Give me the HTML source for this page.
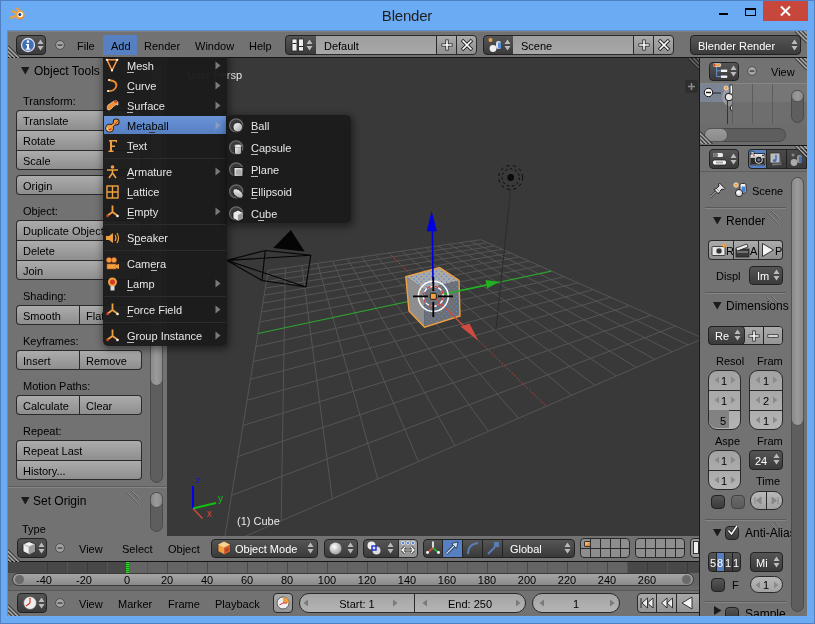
<!DOCTYPE html><html><head><meta charset="utf-8"><style>
*{margin:0;padding:0;box-sizing:border-box}
html,body{width:815px;height:624px;overflow:hidden}
body{position:relative;background:#6AABF4;font-family:"Liberation Sans",sans-serif;font-size:11px}
div{position:absolute}
.t{white-space:nowrap;line-height:1;will-change:transform}
.tc{white-space:nowrap;line-height:1;text-align:center;will-change:transform}
.tool{background:linear-gradient(#ABABAB,#8F8F8F);border:1px solid #2A2A2A}
.dk{background:linear-gradient(#555,#3A3A3A);border:1px solid #222;border-radius:4px}
.num{background:linear-gradient(#A4A4A4,#B6B6B6);border:1px solid #2A2A2A}
.scr{background:#5E5E5E;border:1px solid #4A4A4A;border-radius:7px}
.hdl{background:linear-gradient(90deg,#8A8A8A,#9A9A9A,#8A8A8A);border-radius:7px;border:1px solid #555}
</style></head><body><div style="left:0;top:0;width:815px;height:1px;background:#4F80C4"></div>
<div class="tc" style="left:307px;top:7px;width:200px;font-size:15px;line-height:18px;color:#1E1E1E;letter-spacing:-0.2px">Blender</div>
<div style="left:763px;top:1px;width:45px;height:20px;background:#C7473C"></div>
<svg style="position:absolute;left:779px;top:5px" width="13" height="12"><path d="M2 1.5L11 10.5M11 1.5L2 10.5" stroke="#fff" stroke-width="2"/></svg>
<div style="left:745px;top:8px;width:11px;height:8px;border:1px solid #000;border-top-width:2px"></div>
<div style="left:719px;top:13px;width:9px;height:2px;background:#000"></div>
<svg style="position:absolute;left:9px;top:7px" width="16" height="16"><path d="M11 7.7L3.6 4.2M11 7.7L2 10.6M11 5L8.2 1.6" stroke="#F0A040" stroke-width="2.4" stroke-linecap="round"/><circle cx="11" cy="7.9" r="4.6" fill="#F0A040"/><circle cx="11.2" cy="7.6" r="2.7" fill="#FFF"/><circle cx="10.8" cy="7.6" r="1.5" fill="#1A3A70"/><path d="M14.5 10A4.6 4.6 0 0 1 9.5 12.3" stroke="#D04030" stroke-width="0.8" fill="none" stroke-dasharray="1 1"/></svg>
<div style="left:0;top:0;width:1px;height:624px;background:#4F80C4"></div>
<div style="left:8px;top:31px;width:799px;height:585px;background:#262626"></div>
<div style="left:8px;top:31px;width:799px;height:26px;background:#727272"></div>
<div style="left:8px;top:57px;width:799px;height:1px;background:#151515"></div>
<div style="left:8px;top:30px;width:799px;height:1px;background:#5A8ED6"></div>
<div style="left:8px;top:31px;width:799px;height:1px;background:#7E7E7E"></div>
<svg style="position:absolute;left:8px;top:45px" width="13" height="13"><path d="M0 2L11 13M0 6L7 13M0 10L3 13" stroke="#A8A8A8" stroke-width="1.5"/><path d="M0 0.5L12.5 13M0 4.5L8.5 13M0 8.5L4.5 13" stroke="#1E1E1E" stroke-width="1"/></svg>
<div class="dk" style="left:16px;top:35px;width:30px;height:20px;"></div>
<svg style="position:absolute;left:20px;top:37px" width="16" height="16"><circle cx="8" cy="8" r="6.5" fill="#3E6FB8" stroke="#DDE" stroke-width="1.3"/><circle cx="8" cy="4.6" r="1.3" fill="#fff"/><path d="M6 7H9V11.5H10.3V12.8H5.8V11.5H7V8.3H6Z" fill="#fff"/></svg>
<svg style="position:absolute;left:37px;top:39px" width="7" height="12"><path d="M0.5 5L3.5 0.5L6.5 5Z M0.5 7L3.5 11.5L6.5 7Z" fill="#BBB"/></svg>
<svg style="position:absolute;left:54px;top:39px" width="12" height="12"><circle cx="6" cy="6" r="4.4" fill="#A4A4A4" stroke="#505050" stroke-width="1"/><rect x="3.6" y="5.4" width="4.8" height="1.3" fill="#3A3A3A"/></svg>
<div class="t" style="left:77px;top:41px;font-size:11px;color:#000;">File</div>
<div style="left:103px;top:35px;width:34px;height:20px;background:#5680C2"></div>
<div class="t" style="left:111px;top:41px;font-size:11px;color:#000;">Add</div>
<div class="t" style="left:144px;top:41px;font-size:11px;color:#000;">Render</div>
<div class="t" style="left:195px;top:41px;font-size:11px;color:#000;">Window</div>
<div class="t" style="left:249px;top:41px;font-size:11px;color:#000;">Help</div>
<div class="dk" style="left:285px;top:35px;width:32px;height:20px;border-radius:4px 0 0 4px"></div>
<svg style="position:absolute;left:291px;top:38px" width="14" height="14"><rect x="1" y="1" width="5" height="12" fill="#EEE" stroke="#222" stroke-width="0.8"/><rect x="7.5" y="1" width="5" height="12" fill="#EEE" stroke="#222" stroke-width="0.8"/><rect x="1.5" y="5" width="4" height="1" fill="#222"/><rect x="8" y="8" width="4" height="1" fill="#222"/></svg>
<svg style="position:absolute;left:306px;top:39px" width="7" height="12"><path d="M0.5 5L3.5 0.5L6.5 5Z M0.5 7L3.5 11.5L6.5 7Z" fill="#BBB"/></svg>
<div style="left:316px;top:35px;width:121px;height:20px;background:linear-gradient(#9E9E9E,#A8A8A8);border:1px solid #2A2A2A;border-left:none"></div>
<div class="t" style="left:324px;top:41px;font-size:11px;color:#000;">Default</div>
<div class="tool" style="left:436px;top:35px;width:21px;height:20px;border-left:1px solid #2A2A2A"></div>
<svg style="position:absolute;left:440px;top:38px" width="14" height="14"><path d="M7 1.5V12.5M1.5 7H12.5" stroke="#222" stroke-width="3.2"/><path d="M7 2.2V11.8M2.2 7H11.8" stroke="#fff" stroke-width="1.6"/></svg>
<div class="tool" style="left:456px;top:35px;width:21px;height:20px;border-radius:0 4px 4px 0"></div>
<svg style="position:absolute;left:460px;top:38px" width="14" height="14"><path d="M2 2L12 12M12 2L2 12" stroke="#222" stroke-width="3.4"/><path d="M2.5 2.5L11.5 11.5M11.5 2.5L2.5 11.5" stroke="#fff" stroke-width="1.7"/></svg>
<div class="dk" style="left:483px;top:35px;width:31px;height:20px;border-radius:4px 0 0 4px"></div>
<svg style="position:absolute;left:487px;top:37px" width="16" height="16"><circle cx="3.5" cy="3" r="2" fill="#F0A040"/><rect x="9" y="4" width="5" height="8" rx="2.3" fill="#DDD"/><rect x="11" y="5.5" width="3" height="6" fill="#5A8FD8"/><circle cx="6" cy="11.5" r="3.4" fill="#EEE"/></svg>
<svg style="position:absolute;left:504px;top:39px" width="7" height="12"><path d="M0.5 5L3.5 0.5L6.5 5Z M0.5 7L3.5 11.5L6.5 7Z" fill="#BBB"/></svg>
<div style="left:513px;top:35px;width:121px;height:20px;background:linear-gradient(#9E9E9E,#A8A8A8);border:1px solid #2A2A2A;border-left:none"></div>
<div class="t" style="left:521px;top:41px;font-size:11px;color:#000;">Scene</div>
<div class="tool" style="left:633px;top:35px;width:21px;height:20px;border-left:1px solid #2A2A2A"></div>
<svg style="position:absolute;left:637px;top:38px" width="14" height="14"><path d="M7 1.5V12.5M1.5 7H12.5" stroke="#222" stroke-width="3.2"/><path d="M7 2.2V11.8M2.2 7H11.8" stroke="#fff" stroke-width="1.6"/></svg>
<div class="tool" style="left:653px;top:35px;width:21px;height:20px;border-radius:0 4px 4px 0"></div>
<svg style="position:absolute;left:657px;top:38px" width="14" height="14"><path d="M2 2L12 12M12 2L2 12" stroke="#222" stroke-width="3.4"/><path d="M2.5 2.5L11.5 11.5M11.5 2.5L2.5 11.5" stroke="#fff" stroke-width="1.7"/></svg>
<div class="dk" style="left:690px;top:35px;width:111px;height:20px;"></div>
<div class="t" style="left:698px;top:41px;font-size:11px;color:#FFF;">Blender Render</div>
<svg style="position:absolute;left:791px;top:39px" width="7" height="12"><path d="M0.5 5L3.5 0.5L6.5 5Z M0.5 7L3.5 11.5L6.5 7Z" fill="#BBB"/></svg>
<svg style="position:absolute;left:795px;top:31px" width="12" height="12"><path d="M1 0L12 11M5 0L12 7M9 0L12 3" stroke="#A8A8A8" stroke-width="1.5"/><path d="M-0.5 0L12 12.5M3.5 0L12 8.5M7.5 0L12 4.5" stroke="#1E1E1E" stroke-width="1"/></svg>
<div style="left:8px;top:58px;width:159px;height:478px;background:#727272"></div>
<div class="scr" style="left:150px;top:64px;width:13px;height:419px;"></div>
<div class="hdl" style="left:150px;top:64px;width:13px;height:322px;"></div>
<div class="scr" style="left:150px;top:492px;width:13px;height:40px;"></div>
<div class="hdl" style="left:150px;top:492px;width:13px;height:16px;"></div>
<svg style="position:absolute;left:21px;top:67px" width="9" height="8"><path d="M0 0H8.5L4.25 7.5Z" fill="#1A1A1A"/></svg>
<div class="t" style="left:34px;top:65px;font-size:12px;color:#000;">Object Tools</div>
<div class="t" style="left:23px;top:96px;font-size:11px;color:#000;">Transform:</div>
<div style="left:16px;top:110px;width:126px;height:60px;border-radius:4px;background:#2A2A2A;overflow:hidden"></div>
<div style="left:17px;top:111px;width:124px;height:19px;background:linear-gradient(#ACACAC,#8E8E8E);border-radius:3px 3px 0 0"></div>
<div class="t" style="left:23px;top:116px;font-size:11px;color:#000;">Translate</div>
<div style="left:17px;top:131px;width:124px;height:19px;background:linear-gradient(#ACACAC,#8E8E8E)"></div>
<div class="t" style="left:23px;top:136px;font-size:11px;color:#000;">Rotate</div>
<div style="left:17px;top:151px;width:124px;height:18px;background:linear-gradient(#ACACAC,#8E8E8E);border-radius:0 0 3px 3px"></div>
<div class="t" style="left:23px;top:156px;font-size:11px;color:#000;">Scale</div>
<div style="left:16px;top:175px;width:126px;height:20px;border-radius:4px;background:#2A2A2A;overflow:hidden"></div>
<div style="left:17px;top:176px;width:124px;height:18px;background:linear-gradient(#ACACAC,#8E8E8E);border-radius:3px"></div>
<div class="t" style="left:23px;top:181px;font-size:11px;color:#000;">Origin</div>
<div class="t" style="left:23px;top:206px;font-size:11px;color:#000;">Object:</div>
<div style="left:16px;top:220px;width:126px;height:60px;border-radius:4px;background:#2A2A2A;overflow:hidden"></div>
<div style="left:17px;top:221px;width:124px;height:19px;background:linear-gradient(#ACACAC,#8E8E8E);border-radius:3px 3px 0 0"></div>
<div class="t" style="left:23px;top:226px;font-size:11px;color:#000;">Duplicate Objects</div>
<div style="left:17px;top:241px;width:124px;height:19px;background:linear-gradient(#ACACAC,#8E8E8E)"></div>
<div class="t" style="left:23px;top:246px;font-size:11px;color:#000;">Delete</div>
<div style="left:17px;top:261px;width:124px;height:18px;background:linear-gradient(#ACACAC,#8E8E8E);border-radius:0 0 3px 3px"></div>
<div class="t" style="left:23px;top:266px;font-size:11px;color:#000;">Join</div>
<div class="t" style="left:23px;top:291px;font-size:11px;color:#000;">Shading:</div>
<div style="left:16px;top:305px;width:126px;height:20px;border-radius:4px;background:#2A2A2A"></div>
<div style="left:17px;top:306px;width:62px;height:18px;background:linear-gradient(#ACACAC,#8E8E8E);border-radius:3px 0 0 3px"></div>
<div class="t" style="left:23px;top:311px;font-size:11px;color:#000;">Smooth</div>
<div style="left:80px;top:306px;width:61px;height:18px;background:linear-gradient(#ACACAC,#8E8E8E);border-radius:0 3px 3px 0"></div>
<div class="t" style="left:86px;top:311px;font-size:11px;color:#000;">Flat</div>
<div class="t" style="left:23px;top:336px;font-size:11px;color:#000;">Keyframes:</div>
<div style="left:16px;top:350px;width:126px;height:20px;border-radius:4px;background:#2A2A2A"></div>
<div style="left:17px;top:351px;width:62px;height:18px;background:linear-gradient(#ACACAC,#8E8E8E);border-radius:3px 0 0 3px"></div>
<div class="t" style="left:23px;top:356px;font-size:11px;color:#000;">Insert</div>
<div style="left:80px;top:351px;width:61px;height:18px;background:linear-gradient(#ACACAC,#8E8E8E);border-radius:0 3px 3px 0"></div>
<div class="t" style="left:86px;top:356px;font-size:11px;color:#000;">Remove</div>
<div class="t" style="left:23px;top:381px;font-size:11px;color:#000;">Motion Paths:</div>
<div style="left:16px;top:395px;width:126px;height:20px;border-radius:4px;background:#2A2A2A"></div>
<div style="left:17px;top:396px;width:62px;height:18px;background:linear-gradient(#ACACAC,#8E8E8E);border-radius:3px 0 0 3px"></div>
<div class="t" style="left:23px;top:401px;font-size:11px;color:#000;">Calculate</div>
<div style="left:80px;top:396px;width:61px;height:18px;background:linear-gradient(#ACACAC,#8E8E8E);border-radius:0 3px 3px 0"></div>
<div class="t" style="left:86px;top:401px;font-size:11px;color:#000;">Clear</div>
<div class="t" style="left:23px;top:426px;font-size:11px;color:#000;">Repeat:</div>
<div style="left:16px;top:440px;width:126px;height:40px;border-radius:4px;background:#2A2A2A;overflow:hidden"></div>
<div style="left:17px;top:441px;width:124px;height:19px;background:linear-gradient(#ACACAC,#8E8E8E);border-radius:3px 3px 0 0"></div>
<div class="t" style="left:23px;top:446px;font-size:11px;color:#000;">Repeat Last</div>
<div style="left:17px;top:461px;width:124px;height:18px;background:linear-gradient(#ACACAC,#8E8E8E);border-radius:0 0 3px 3px"></div>
<div class="t" style="left:23px;top:466px;font-size:11px;color:#000;">History...</div>
<div style="left:8px;top:486px;width:159px;height:1px;background:#5E5E5E"></div>
<div style="left:8px;top:487px;width:159px;height:1px;background:#858585"></div>
<svg style="position:absolute;left:21px;top:497px" width="9" height="8"><path d="M0 0H8.5L4.25 7.5Z" fill="#1A1A1A"/></svg>
<div class="t" style="left:33px;top:495px;font-size:12px;color:#000;">Set Origin</div>
<svg style="position:absolute;left:124px;top:490px" width="17" height="17"><path d="M2 2L15 15M7 1L15 9" stroke="#5A5A5A" stroke-width="1"/><path d="M3 2L16 15M8 1L16 9" stroke="#8A8A8A" stroke-width="1"/></svg>
<div class="t" style="left:22px;top:524px;font-size:11px;color:#000;">Type</div>
<svg style="position:absolute;left:167px;top:58px" width="532" height="478" viewBox="167 58 532 478"><rect x="167" y="58" width="532" height="478" fill="#393939"/><path d="M268.2 270.4L480.7 239.7M268.2 270.4L223.4 545.8M267.3 275.7L487.4 242.7M285.3 267.9L281.2 520.8M266.3 281.6L494.6 245.9M301.8 265.5L332.3 498.8M265.3 288.1L502.3 249.3M317.6 263.2L377.8 479.1M264.1 295.2L510.6 253.0M332.9 261.0L418.5 461.5M262.8 303.2L519.6 256.9M347.7 258.9L455.2 445.7M261.4 312.1L529.3 261.2M361.9 256.9L488.4 431.3M259.7 322.1L539.9 265.9M375.6 254.9L518.6 418.3M255.8 346.6L564.0 276.7M401.7 251.1L571.5 395.4M253.3 361.7L577.9 282.8M414.1 249.3L594.8 385.3M250.4 379.3L593.3 289.6M426.1 247.6L616.4 376.0M247.0 400.3L610.4 297.2M437.7 245.9L636.3 367.4M242.9 425.5L629.5 305.7M449.0 244.3L654.8 359.4M237.9 456.5L651.0 315.3M459.9 242.7L672.1 351.9M231.6 495.4L675.4 326.1M470.5 241.2L688.2 345.0M223.4 545.8L703.3 338.4M480.7 239.7L703.3 338.4" stroke="#555555" stroke-width="1" fill="none"/><path d="M257.9 333.5L551.4 271.1" stroke="#2FA12F" stroke-width="1.2"/><path d="M388.9 253.0L546.2 406.3" stroke="#C8493F" stroke-width="1" stroke-dasharray="1.5 2"/><path d="M510.7 189.5L495.8 330.9" stroke="#2C2C2C" stroke-width="1"/><circle cx="510.7" cy="177.5" r="3.4" fill="#0A0A0A"/><circle cx="510.7" cy="177.5" r="8.7" fill="none" stroke="#0A0A0A" stroke-width="1" stroke-dasharray="2.5 2.5"/><circle cx="510.7" cy="177.5" r="12" fill="none" stroke="#0A0A0A" stroke-width="1" stroke-dasharray="3 3.5"/><path d="M227.1 260.4L265.2 250.5M227.1 260.4L310.8 255.3M227.1 260.4L305.9 287.0M227.1 260.4L262.0 280.6M265.2 250.5L310.8 255.3L305.9 287.0L262.0 280.6Z" stroke="#050505" stroke-width="1.1" fill="none"/><path d="M273.2 247.9L290.9 230L304.6 251.4Z" fill="#050505"/><path d="M405.8 276.6L439.6 267.6L459.0 280.4L424.0 289.5Z" fill="#A9A9A9"/><path d="M405.8 276.6L424.0 289.5L424.5 327.2L409.0 311.0Z" fill="#8E8E8E"/><path d="M424.0 289.5L459.0 280.4L460.0 316.0L424.5 327.2Z" fill="#6E6E6E"/><defs><pattern id="dots" width="5" height="5" patternUnits="userSpaceOnUse"><circle cx="1.5" cy="1.5" r="0.8" fill="#5B86CC"/><circle cx="4" cy="4" r="0.8" fill="#5B86CC"/></pattern></defs><path d="M405.8 276.6L439.6 267.6L459.0 280.4L424.0 289.5Z" fill="url(#dots)"/><path d="M424.0 289.5L459.0 280.4L460.0 316.0L424.5 327.2Z" fill="url(#dots)"/><path d="M405.8 276.6L439.6 267.6L459.0 280.4L460.0 316.0L424.5 327.2L409.0 311.0Z" fill="none" stroke="#F0A040" stroke-width="1.4"/><path d="M433 283L432.4 231" stroke="#0000E0" stroke-width="1.6"/><path d="M431.6 210.9L426.8 231.3L436.9 231.3Z" fill="#0000E0"/><path d="M499.7 281.7L485.5 280L487 288.5Z" fill="#22B022"/><path d="M433.2 296.2L470 332" stroke="#D04A3F" stroke-width="1.2"/><path d="M478.5 341L460.5 326.5L469.5 323.5Z" fill="#D04A3F"/><path d="M441.2 294.7L487 285" stroke="#22B022" stroke-width="1.4"/><circle cx="433.3" cy="296.3" r="15" fill="none" stroke="#FFF" stroke-width="1.5"/><circle cx="433.3" cy="296.3" r="10" fill="none" stroke="#FFF" stroke-width="1.3"/><circle cx="433.3" cy="296.3" r="10" fill="none" stroke="#D03030" stroke-width="1.3" stroke-dasharray="4 4"/><path d="M413 296.3H428M438 296.3H453M433.3 277V291M433.3 302V317" stroke="#000" stroke-width="1.8"/><rect x="430.3" y="293.3" width="6" height="6" rx="1" fill="#F0A040" stroke="#000" stroke-width="0.8"/><path d="M193 508.5V486" stroke="#0000F0" stroke-width="2"/><path d="M193 508.5L216 503" stroke="#10C010" stroke-width="1.8"/><path d="M193 508.5L202.5 518.5" stroke="#D04A3F" stroke-width="1.5"/></svg>
<div class="t" style="left:196px;top:476px;font-size:9px;color:#1010F0;">z</div>
<div class="t" style="left:218px;top:494px;font-size:10px;color:#10C010;">y</div>
<div class="t" style="left:207px;top:509px;font-size:10px;color:#D04A3F;">x</div>
<div class="t" style="left:187px;top:70px;font-size:11px;color:#E8E8E8;">User Persp</div>
<div class="t" style="left:237px;top:516px;font-size:11px;color:#E8E8E8;">(1) Cube</div>
<div style="left:685px;top:80px;width:13px;height:13px;background:rgba(40,40,40,0.6);border-radius:3px"></div>
<svg style="position:absolute;left:687px;top:82px" width="9" height="9"><path d="M4.5 1V8M1 4.5H8" stroke="#8A8A8A" stroke-width="1.6"/></svg>
<svg style="position:absolute;left:688px;top:58px" width="12" height="12"><path d="M1 0L12 11M5 0L12 7M9 0L12 3" stroke="#6A6A6A" stroke-width="1.5"/><path d="M-0.5 0L12 12.5M3.5 0L12 8.5M7.5 0L12 4.5" stroke="#1E1E1E" stroke-width="1"/></svg>
<div style="left:699px;top:58px;width:1px;height:478px;background:#1A1A1A"></div>
<div style="left:8px;top:536px;width:691px;height:25px;background:#727272"></div>
<div style="left:8px;top:561px;width:691px;height:1px;background:#151515"></div>
<svg style="position:absolute;left:8px;top:549px" width="13" height="13"><path d="M0 2L11 13M0 6L7 13M0 10L3 13" stroke="#A8A8A8" stroke-width="1.5"/><path d="M0 0.5L12.5 13M0 4.5L8.5 13M0 8.5L4.5 13" stroke="#1E1E1E" stroke-width="1"/></svg>
<div class="dk" style="left:17px;top:538px;width:30px;height:20px;"></div>
<svg style="position:absolute;left:21px;top:540px" width="16" height="16"><path d="M8 1.5L14 4V11.5L8 14.5L2 11.5V4Z" fill="#EEE" stroke="#222" stroke-width="0.8"/><path d="M8 7L14 4M8 7V14.5M8 7L2 4" stroke="#888" stroke-width="0.6"/><path d="M8 7L14 4V11.5L8 14.5Z" fill="#9A9A9A"/></svg>
<svg style="position:absolute;left:38px;top:542px" width="7" height="12"><path d="M0.5 5L3.5 0.5L6.5 5Z M0.5 7L3.5 11.5L6.5 7Z" fill="#BBB"/></svg>
<svg style="position:absolute;left:54px;top:542px" width="12" height="12"><circle cx="6" cy="6" r="4.4" fill="#A4A4A4" stroke="#505050" stroke-width="1"/><rect x="3.6" y="5.4" width="4.8" height="1.3" fill="#3A3A3A"/></svg>
<div class="t" style="left:79px;top:544px;font-size:11px;color:#000;">View</div>
<div class="t" style="left:122px;top:544px;font-size:11px;color:#000;">Select</div>
<div class="t" style="left:168px;top:544px;font-size:11px;color:#000;">Object</div>
<div class="dk" style="left:211px;top:539px;width:107px;height:19px;"></div>
<svg style="position:absolute;left:216px;top:540px" width="16" height="16"><path d="M8 1.5L14 4.5V11.5L8 14.5L2 11.5V4.5Z" fill="#F0A040" stroke="#333" stroke-width="0.8"/><path d="M8 7.5L14 4.5V11.5L8 14.5Z" fill="#D0602A"/><path d="M8 7.5L2 4.5L8 1.5L14 4.5Z" fill="#F8D090"/><path d="M9.5 9L12.5 7.5V10.5L9.5 12Z" fill="#C03A2A"/></svg>
<div class="t" style="left:235px;top:544px;font-size:11px;color:#FFF;">Object Mode</div>
<svg style="position:absolute;left:307px;top:542px" width="7" height="12"><path d="M0.5 5L3.5 0.5L6.5 5Z M0.5 7L3.5 11.5L6.5 7Z" fill="#BBB"/></svg>
<div class="dk" style="left:324px;top:539px;width:34px;height:19px;"></div>
<svg style="position:absolute;left:328px;top:541px" width="15" height="15"><defs><radialGradient id="sg" cx="0.4" cy="0.35" r="0.7"><stop offset="0" stop-color="#FFF"/><stop offset="1" stop-color="#9A9A9A"/></radialGradient></defs><circle cx="7.5" cy="7.5" r="6" fill="url(#sg)"/></svg>
<svg style="position:absolute;left:347px;top:542px" width="7" height="12"><path d="M0.5 5L3.5 0.5L6.5 5Z M0.5 7L3.5 11.5L6.5 7Z" fill="#BBB"/></svg>
<div class="dk" style="left:363px;top:539px;width:36px;height:19px;border-radius:4px 0 0 4px"></div>
<svg style="position:absolute;left:366px;top:540px" width="16" height="16"><circle cx="5.5" cy="5.5" r="4" fill="#EEE"/><circle cx="10.5" cy="10.5" r="4" fill="#DDD"/><rect x="6" y="6" width="4" height="4" fill="none" stroke="#1A2AD8" stroke-width="1.4"/></svg>
<svg style="position:absolute;left:387px;top:542px" width="7" height="12"><path d="M0.5 5L3.5 0.5L6.5 5Z M0.5 7L3.5 11.5L6.5 7Z" fill="#BBB"/></svg>
<div style="left:398px;top:539px;width:20px;height:19px;background:linear-gradient(#A8A8A8,#959595);border:1px solid #2A2A2A;border-radius:0 4px 4px 0"></div>
<svg style="position:absolute;left:400px;top:540px" width="16" height="16"><circle cx="3" cy="3" r="1.6" fill="#5080D0" stroke="#fff" stroke-width="0.6"/><circle cx="8" cy="3" r="1.6" fill="#5080D0" stroke="#fff" stroke-width="0.6"/><circle cx="13" cy="3" r="1.6" fill="#5080D0" stroke="#fff" stroke-width="0.6"/><path d="M2 10H14M2 10L5 7M2 10L5 13M14 10L11 7M14 10L11 13" stroke="#222" stroke-width="2.6"/><path d="M2 10H14M2 10L5 7M2 10L5 13M14 10L11 7M14 10L11 13" stroke="#FFF" stroke-width="1.2"/></svg>
<div class="dk" style="left:423px;top:539px;width:152px;height:19px;"></div>
<div style="left:442px;top:539px;width:21px;height:19px;background:#5680C2;border-top:1px solid #222;border-bottom:1px solid #222"></div>
<div style="left:442px;top:540px;width:1px;height:17px;background:#222"></div>
<div style="left:462px;top:540px;width:1px;height:17px;background:#222"></div>
<div style="left:482px;top:540px;width:1px;height:17px;background:#222"></div>
<div style="left:502px;top:540px;width:1px;height:17px;background:#222"></div>
<svg style="position:absolute;left:425px;top:540px" width="16" height="16"><path d="M8 8V1.5" stroke="#FFF" stroke-width="1.6"/><path d="M8 8L2 13" stroke="#D04A3F" stroke-width="1.8"/><path d="M8 8L14 13" stroke="#22B022" stroke-width="1.8"/><circle cx="2.5" cy="12.5" r="1.4" fill="#FFF"/><circle cx="13.5" cy="12.5" r="1.4" fill="#FFF"/></svg>
<svg style="position:absolute;left:444px;top:540px" width="16" height="16"><path d="M2.5 13.5L12 4" stroke="#1E2A40" stroke-width="3"/><path d="M2.5 13.5L12 4" stroke="#CFE0FF" stroke-width="1.4"/><path d="M14 2L7.5 3.5L12.5 8.5Z" fill="#CFE0FF" stroke="#1E2A40" stroke-width="0.8"/></svg>
<svg style="position:absolute;left:465px;top:540px" width="16" height="16"><path d="M3 14Q3 4 13 3" stroke="#5B7DB5" stroke-width="2" fill="none"/></svg>
<svg style="position:absolute;left:485px;top:540px" width="16" height="16"><path d="M3 14L10 7" stroke="#5B7DB5" stroke-width="2"/><rect x="9" y="2" width="5" height="5" fill="#5B7DB5"/></svg>
<div class="t" style="left:510px;top:544px;font-size:11px;color:#FFF;">Global</div>
<svg style="position:absolute;left:564px;top:542px" width="7" height="12"><path d="M0.5 5L3.5 0.5L6.5 5Z M0.5 7L3.5 11.5L6.5 7Z" fill="#BBB"/></svg>
<div style="left:580px;top:538px;width:50px;height:20px;border:1px solid #2A2A2A;border-radius:4px;background:#8E8E8E;overflow:hidden"></div>
<div style="left:590px;top:539px;width:1px;height:18px;background:#2A2A2A"></div>
<div style="left:600px;top:539px;width:1px;height:18px;background:#2A2A2A"></div>
<div style="left:610px;top:539px;width:1px;height:18px;background:#2A2A2A"></div>
<div style="left:620px;top:539px;width:1px;height:18px;background:#2A2A2A"></div>
<div style="left:581px;top:547.5px;width:48px;height:1px;background:#2A2A2A"></div>
<div style="left:635px;top:538px;width:50px;height:20px;border:1px solid #2A2A2A;border-radius:4px;background:#8E8E8E;overflow:hidden"></div>
<div style="left:645px;top:539px;width:1px;height:18px;background:#2A2A2A"></div>
<div style="left:655px;top:539px;width:1px;height:18px;background:#2A2A2A"></div>
<div style="left:665px;top:539px;width:1px;height:18px;background:#2A2A2A"></div>
<div style="left:675px;top:539px;width:1px;height:18px;background:#2A2A2A"></div>
<div style="left:636px;top:547.5px;width:48px;height:1px;background:#2A2A2A"></div>
<div style="left:584px;top:541px;width:7px;height:6px;background:linear-gradient(135deg,#F8D090,#E07020);border:1px solid #333;border-radius:1px"></div>
<div style="left:690px;top:538px;width:12px;height:20px;border:1px solid #2A2A2A;border-radius:4px 0 0 4px;background:#9A9A9A"></div>
<div style="left:693px;top:541px;width:6px;height:13px;background:#EEE;border:1px solid #333"></div>
<div style="left:8px;top:562px;width:691px;height:29px;background:#646464"></div>
<div style="left:8px;top:562px;width:119px;height:11px;background:#484848"></div>
<div style="left:628px;top:562px;width:71px;height:11px;background:#484848"></div>
<div style="left:47px;top:562px;width:1px;height:11px;background:#3A3A3A"></div>
<div style="left:67px;top:562px;width:1px;height:11px;background:#565656"></div>
<div style="left:87px;top:562px;width:1px;height:11px;background:#3A3A3A"></div>
<div style="left:107px;top:562px;width:1px;height:11px;background:#565656"></div>
<div style="left:127px;top:562px;width:1px;height:11px;background:#4A4A4A"></div>
<div style="left:147px;top:562px;width:1px;height:11px;background:#565656"></div>
<div style="left:167px;top:562px;width:1px;height:11px;background:#4A4A4A"></div>
<div style="left:187px;top:562px;width:1px;height:11px;background:#565656"></div>
<div style="left:207px;top:562px;width:1px;height:11px;background:#4A4A4A"></div>
<div style="left:227px;top:562px;width:1px;height:11px;background:#565656"></div>
<div style="left:247px;top:562px;width:1px;height:11px;background:#4A4A4A"></div>
<div style="left:267px;top:562px;width:1px;height:11px;background:#565656"></div>
<div style="left:287px;top:562px;width:1px;height:11px;background:#4A4A4A"></div>
<div style="left:307px;top:562px;width:1px;height:11px;background:#565656"></div>
<div style="left:327px;top:562px;width:1px;height:11px;background:#4A4A4A"></div>
<div style="left:347px;top:562px;width:1px;height:11px;background:#565656"></div>
<div style="left:367px;top:562px;width:1px;height:11px;background:#4A4A4A"></div>
<div style="left:387px;top:562px;width:1px;height:11px;background:#565656"></div>
<div style="left:407px;top:562px;width:1px;height:11px;background:#4A4A4A"></div>
<div style="left:427px;top:562px;width:1px;height:11px;background:#565656"></div>
<div style="left:447px;top:562px;width:1px;height:11px;background:#4A4A4A"></div>
<div style="left:467px;top:562px;width:1px;height:11px;background:#565656"></div>
<div style="left:487px;top:562px;width:1px;height:11px;background:#4A4A4A"></div>
<div style="left:507px;top:562px;width:1px;height:11px;background:#565656"></div>
<div style="left:527px;top:562px;width:1px;height:11px;background:#4A4A4A"></div>
<div style="left:547px;top:562px;width:1px;height:11px;background:#565656"></div>
<div style="left:567px;top:562px;width:1px;height:11px;background:#4A4A4A"></div>
<div style="left:587px;top:562px;width:1px;height:11px;background:#565656"></div>
<div style="left:607px;top:562px;width:1px;height:11px;background:#4A4A4A"></div>
<div style="left:627px;top:562px;width:1px;height:11px;background:#565656"></div>
<div style="left:647px;top:562px;width:1px;height:11px;background:#3A3A3A"></div>
<div style="left:667px;top:562px;width:1px;height:11px;background:#565656"></div>
<div style="left:687px;top:562px;width:1px;height:11px;background:#3A3A3A"></div>
<div style="left:126px;top:562px;width:3px;height:11px;background:repeating-linear-gradient(#30E030 0 1px,#148A14 1px 2px)"></div>
<div style="left:12px;top:573px;width:682px;height:13px;background:linear-gradient(#A6A6A6,#8A8A8A);border:1px solid #3A3A3A;border-radius:7px"></div>
<div style="left:15px;top:575px;width:9px;height:9px;border-radius:50%;background:#6A6A6A"></div>
<div style="left:682px;top:575px;width:9px;height:9px;border-radius:50%;background:#6A6A6A"></div>
<div class="tc" style="left:-56px;top:575px;width:200px;font-size:11px;color:#000;">-40</div>
<div class="tc" style="left:-16px;top:575px;width:200px;font-size:11px;color:#000;">-20</div>
<div class="tc" style="left:27px;top:575px;width:200px;font-size:11px;color:#000;">0</div>
<div class="tc" style="left:67px;top:575px;width:200px;font-size:11px;color:#000;">20</div>
<div class="tc" style="left:107px;top:575px;width:200px;font-size:11px;color:#000;">40</div>
<div class="tc" style="left:147px;top:575px;width:200px;font-size:11px;color:#000;">60</div>
<div class="tc" style="left:187px;top:575px;width:200px;font-size:11px;color:#000;">80</div>
<div class="tc" style="left:227px;top:575px;width:200px;font-size:11px;color:#000;">100</div>
<div class="tc" style="left:267px;top:575px;width:200px;font-size:11px;color:#000;">120</div>
<div class="tc" style="left:307px;top:575px;width:200px;font-size:11px;color:#000;">140</div>
<div class="tc" style="left:347px;top:575px;width:200px;font-size:11px;color:#000;">160</div>
<div class="tc" style="left:387px;top:575px;width:200px;font-size:11px;color:#000;">180</div>
<div class="tc" style="left:427px;top:575px;width:200px;font-size:11px;color:#000;">200</div>
<div class="tc" style="left:467px;top:575px;width:200px;font-size:11px;color:#000;">220</div>
<div class="tc" style="left:507px;top:575px;width:200px;font-size:11px;color:#000;">240</div>
<div class="tc" style="left:547px;top:575px;width:200px;font-size:11px;color:#000;">260</div>
<div style="left:8px;top:586px;width:691px;height:5px;background:#6A6A6A"></div>
<div style="left:8px;top:590px;width:691px;height:1px;background:#585858"></div>
<div style="left:8px;top:591px;width:691px;height:25px;background:#727272"></div>
<svg style="position:absolute;left:8px;top:604px" width="13" height="13"><path d="M0 2L11 13M0 6L7 13M0 10L3 13" stroke="#A8A8A8" stroke-width="1.5"/><path d="M0 0.5L12.5 13M0 4.5L8.5 13M0 8.5L4.5 13" stroke="#1E1E1E" stroke-width="1"/></svg>
<div class="dk" style="left:17px;top:593px;width:30px;height:20px;"></div>
<svg style="position:absolute;left:22px;top:595px" width="16" height="16"><circle cx="8" cy="8" r="6.5" fill="#EEE" stroke="#555" stroke-width="0.8"/><path d="M8 8L4 11M8 8L8 3" stroke="#D03A2A" stroke-width="1.2"/></svg>
<svg style="position:absolute;left:38px;top:597px" width="7" height="12"><path d="M0.5 5L3.5 0.5L6.5 5Z M0.5 7L3.5 11.5L6.5 7Z" fill="#BBB"/></svg>
<svg style="position:absolute;left:54px;top:597px" width="12" height="12"><circle cx="6" cy="6" r="4.4" fill="#A4A4A4" stroke="#505050" stroke-width="1"/><rect x="3.6" y="5.4" width="4.8" height="1.3" fill="#3A3A3A"/></svg>
<div class="t" style="left:79px;top:599px;font-size:11px;color:#000;">View</div>
<div class="t" style="left:118px;top:599px;font-size:11px;color:#000;">Marker</div>
<div class="t" style="left:168px;top:599px;font-size:11px;color:#000;">Frame</div>
<div class="t" style="left:215px;top:599px;font-size:11px;color:#000;">Playback</div>
<div style="left:273px;top:593px;width:20px;height:20px;background:linear-gradient(#A8A8A8,#959595);border:1px solid #2A2A2A;border-radius:4px"></div>
<svg style="position:absolute;left:275px;top:595px" width="16" height="16"><circle cx="8" cy="8" r="6" fill="#EEE" stroke="#444" stroke-width="0.8"/><path d="M8 8V2A6 6 0 0 1 14 8Z" fill="#F0A040"/><path d="M8 8L4.5 10M8 8H12" stroke="#D03A2A" stroke-width="1"/></svg>
<div style="left:299px;top:593px;width:227px;height:20px;background:linear-gradient(#A4A4A4,#B4B4B4);border:1px solid #2A2A2A;border-radius:10px"></div>
<div style="left:414px;top:594px;width:1px;height:18px;background:#2A2A2A"></div>
<div class="tc" style="left:257px;top:599px;width:200px;font-size:11px;color:#000;">Start: 1</div>
<div class="tc" style="left:370px;top:599px;width:200px;font-size:11px;color:#000;">End: 250</div>
<svg style="position:absolute;left:303px;top:599px" width="6" height="8"><path d="M5 0.5V7.5L0.5 4Z" fill="#7A7A7A"/></svg>
<svg style="position:absolute;left:392px;top:599px" width="6" height="8"><path d="M1 0.5V7.5L5.5 4Z" fill="#7A7A7A"/></svg>
<svg style="position:absolute;left:422px;top:599px" width="6" height="8"><path d="M5 0.5V7.5L0.5 4Z" fill="#7A7A7A"/></svg>
<svg style="position:absolute;left:515px;top:599px" width="6" height="8"><path d="M1 0.5V7.5L5.5 4Z" fill="#7A7A7A"/></svg>
<div style="left:532px;top:593px;width:88px;height:20px;background:linear-gradient(#A4A4A4,#B4B4B4);border:1px solid #2A2A2A;border-radius:10px"></div>
<div class="tc" style="left:476px;top:599px;width:200px;font-size:11px;color:#000;">1</div>
<svg style="position:absolute;left:539px;top:599px" width="6" height="8"><path d="M5 0.5V7.5L0.5 4Z" fill="#7A7A7A"/></svg>
<svg style="position:absolute;left:609px;top:599px" width="6" height="8"><path d="M1 0.5V7.5L5.5 4Z" fill="#7A7A7A"/></svg>
<div style="left:637px;top:593px;width:65px;height:20px;background:linear-gradient(#A8A8A8,#959595);border:1px solid #2A2A2A;border-radius:4px 0 0 4px"></div>
<div style="left:656px;top:594px;width:1px;height:18px;background:#2A2A2A"></div>
<div style="left:676px;top:594px;width:1px;height:18px;background:#2A2A2A"></div>
<svg style="position:absolute;left:639px;top:596px" width="16" height="14"><path d="M2 2V12M14 2L8.5 7L14 12ZM8.5 2L3 7L8.5 12Z" fill="#EEE" stroke="#222" stroke-width="0.9"/></svg>
<svg style="position:absolute;left:659px;top:596px" width="16" height="14"><path d="M13.5 2L8 7L13.5 12ZM8 2L2.5 7L8 12Z" fill="#EEE" stroke="#222" stroke-width="0.9"/></svg>
<svg style="position:absolute;left:679px;top:595px" width="16" height="16"><path d="M13 2L3 8L13 14Z" fill="#F4F4F4" stroke="#222" stroke-width="0.9"/></svg>
<div style="left:699px;top:536px;width:1px;height:80px;background:#1A1A1A"></div>
<div style="left:700px;top:58px;width:107px;height:26px;background:#727272"></div>
<div class="dk" style="left:709px;top:62px;width:30px;height:19px;"></div>
<svg style="position:absolute;left:712px;top:62px" width="17" height="17"><rect x="2" y="1.8" width="6.5" height="2.6" fill="#F0A040" stroke="#FFF" stroke-width="0.6"/><rect x="2" y="1.8" width="1.2" height="2.6" fill="#D03A2A"/><path d="M4.6 4.8V14.6M4.6 8.8H9M4.6 14.6H9" stroke="#6A9AE0" stroke-width="0.9"/><rect x="9" y="7.6" width="6.2" height="2.4" fill="#F4F4F4"/><rect x="9" y="13.5" width="6.2" height="2.4" fill="#F4F4F4"/></svg>
<svg style="position:absolute;left:730px;top:65px" width="7" height="12"><path d="M0.5 5L3.5 0.5L6.5 5Z M0.5 7L3.5 11.5L6.5 7Z" fill="#BBB"/></svg>
<svg style="position:absolute;left:746px;top:65px" width="12" height="12"><circle cx="6" cy="6" r="4.4" fill="#A4A4A4" stroke="#505050" stroke-width="1"/><rect x="3.6" y="5.4" width="4.8" height="1.3" fill="#3A3A3A"/></svg>
<div class="t" style="left:771px;top:67px;font-size:11px;color:#000;">View</div>
<svg style="position:absolute;left:795px;top:58px" width="12" height="12"><path d="M1 0L12 11M5 0L12 7M9 0L12 3" stroke="#A8A8A8" stroke-width="1.5"/><path d="M-0.5 0L12 12.5M3.5 0L12 8.5M7.5 0L12 4.5" stroke="#1E1E1E" stroke-width="1"/></svg>
<div style="left:700px;top:84px;width:107px;height:61px;background:#6C6C6C"></div>
<div style="left:700px;top:83px;width:107px;height:1px;background:#868686"></div>
<div style="left:700px;top:84px;width:107px;height:18px;background:#767676"></div>
<div style="left:700px;top:84px;width:32px;height:18px;background:#7A8494"></div>
<div style="left:700px;top:102px;width:107px;height:22px;background:#6E6E6E"></div>
<div style="left:732px;top:84px;width:1px;height:40px;background:#5C5C5C"></div>
<div style="left:752px;top:84px;width:1px;height:40px;background:#5C5C5C"></div>
<div style="left:772px;top:84px;width:1px;height:40px;background:#5C5C5C"></div>
<div style="left:700px;top:84px;width:32px;height:40px;overflow:hidden"><svg width="40" height="40"><circle cx="32" cy="13" r="10" fill="#B0B0B0" opacity="0.55"/><path d="M13 9H21" stroke="#222" stroke-width="1"/><circle cx="8.5" cy="8.5" r="4.2" fill="#F8F8F8" stroke="#111" stroke-width="1"/><rect x="6" y="7.8" width="5" height="1.4" fill="#111"/><circle cx="26" cy="4" r="2" fill="#F0A040" stroke="#FFF" stroke-width="0.6"/><circle cx="29" cy="13" r="3.8" fill="#E8E8E8" stroke="#111" stroke-width="1"/><rect x="30" y="1" width="3" height="9" fill="#F4F4F4" stroke="#111" stroke-width="0.8"/><path d="M27.5 17V40" stroke="#333" stroke-width="1"/><circle cx="34" cy="24" r="3.6" fill="#E8E8E8" stroke="#111" stroke-width="1"/></svg></div>
<div class="scr" style="left:791px;top:90px;width:13px;height:33px;"></div>
<div class="hdl" style="left:791px;top:90px;width:13px;height:12px;"></div>
<div class="scr" style="left:704px;top:128px;width:82px;height:14px;"></div>
<div style="left:704px;top:128px;width:24px;height:14px;border-radius:7px;background:linear-gradient(#9A9A9A,#8A8A8A);border:1px solid #555"></div>
<svg style="position:absolute;left:700px;top:131px" width="13" height="13"><path d="M0 2L11 13M0 6L7 13M0 10L3 13" stroke="#A8A8A8" stroke-width="1.5"/><path d="M0 0.5L12.5 13M0 4.5L8.5 13M0 8.5L4.5 13" stroke="#1E1E1E" stroke-width="1"/></svg>
<div style="left:700px;top:145px;width:107px;height:1px;background:#151515"></div>
<div style="left:700px;top:146px;width:107px;height:470px;background:#727272"></div>
<div class="dk" style="left:709px;top:149px;width:30px;height:20px;"></div>
<svg style="position:absolute;left:712px;top:151px" width="16" height="16"><rect x="1" y="2" width="10" height="4" rx="1.5" fill="#E8E8E8"/><rect x="1" y="2" width="5" height="4" rx="1.5" fill="#777"/><rect x="0.5" y="9" width="14" height="5" rx="2" fill="#F4F4F4" stroke="#222" stroke-width="0.8"/><rect x="4" y="10.5" width="7" height="2" fill="#AAA"/></svg>
<svg style="position:absolute;left:730px;top:153px" width="7" height="12"><path d="M0.5 5L3.5 0.5L6.5 5Z M0.5 7L3.5 11.5L6.5 7Z" fill="#BBB"/></svg>
<div style="left:748px;top:149px;width:59px;height:20px;background:linear-gradient(#4A4A4A,#3A3A3A);border:1px solid #222;border-radius:4px 0 0 4px"></div>
<div style="left:748px;top:149px;width:19px;height:20px;background:#5680C2;border:1px solid #222;border-radius:4px 0 0 4px"></div>
<div style="left:766px;top:150px;width:1px;height:18px;background:#222"></div>
<div style="left:786px;top:150px;width:1px;height:18px;background:#222"></div>
<svg style="position:absolute;left:749px;top:151px" width="17" height="16"><rect x="0.8" y="2.3" width="15.4" height="12" rx="1.2" fill="#1A1A1A"/><rect x="1.5" y="3" width="14" height="10.5" rx="1" fill="#E4E4E4"/><rect x="2" y="0.8" width="3" height="2.2" fill="#E4E4E4" stroke="#1A1A1A" stroke-width="0.6"/><rect x="1.5" y="7" width="14" height="6.5" fill="#2A2A2A"/><rect x="1.5" y="5.5" width="14" height="1.5" fill="#BDBDBD"/><circle cx="9.8" cy="8.8" r="3.6" fill="#222" stroke="#D8D8D8" stroke-width="1"/><circle cx="9.8" cy="8.8" r="1.6" fill="#5A7A9A"/><circle cx="5" cy="4.5" r="0.8" fill="#D03A2A"/><rect x="13" y="3.8" width="2" height="1.2" fill="#333"/></svg>
<svg style="position:absolute;left:768px;top:151px" width="17" height="16"><path d="M3 6L13 5L14 14L4 15Z" fill="#777" stroke="#333" stroke-width="0.6"/><rect x="2" y="2" width="10" height="10" fill="#BBB" stroke="#333" stroke-width="0.8"/><path d="M8 4V9.5" stroke="#3A6FC0" stroke-width="1.4"/><circle cx="6.5" cy="9.5" r="1.6" fill="#3A6FC0"/></svg>
<svg style="position:absolute;left:788px;top:151px" width="19" height="16"><circle cx="5" cy="4" r="1.5" fill="#888"/><rect x="9" y="4" width="5" height="8" rx="2.3" fill="#999"/><rect x="11" y="5.5" width="3" height="6" fill="#4070B0"/><circle cx="6" cy="11.5" r="3.4" fill="#AAA"/></svg>
<svg style="position:absolute;left:795px;top:146px" width="12" height="12"><path d="M1 0L12 11M5 0L12 7M9 0L12 3" stroke="#A8A8A8" stroke-width="1.5"/><path d="M-0.5 0L12 12.5M3.5 0L12 8.5M7.5 0L12 4.5" stroke="#1E1E1E" stroke-width="1"/></svg>
<div style="left:700px;top:171px;width:107px;height:1px;background:#5E5E5E"></div>
<svg style="position:absolute;left:709px;top:181px" width="18" height="18"><path d="M1.5 16L7 10.5" stroke="#222" stroke-width="2.2"/><path d="M1.5 16L7 10.5" stroke="#EEE" stroke-width="1"/><path d="M5 8.5L9.5 13L10.5 10.5L13 8L15 8.5L16 7.5L10.5 2L9.5 3L10 5L7.5 7.5Z" fill="#E0E0E0" stroke="#222" stroke-width="1"/><path d="M8 8L11 11" stroke="#999" stroke-width="1"/></svg>
<svg style="position:absolute;left:733px;top:182px" width="16" height="16"><circle cx="3" cy="3" r="2.2" fill="#F0A040" stroke="#FFF" stroke-width="0.7"/><rect x="7" y="1.5" width="6" height="9.5" rx="1.5" fill="#F4F4F4" stroke="#222" stroke-width="0.9"/><rect x="8.5" y="4.5" width="3.5" height="6" fill="#4A86D8"/><circle cx="6" cy="11" r="3.6" fill="#E0E0E0" stroke="#222" stroke-width="1"/><circle cx="5.3" cy="10.3" r="1.4" fill="#FFF"/></svg>
<div class="t" style="left:752px;top:186px;font-size:11px;color:#000;">Scene</div>
<div class="scr" style="left:791px;top:177px;width:13px;height:435px;"></div>
<div class="hdl" style="left:791px;top:177px;width:13px;height:249px;"></div>
<div style="left:705px;top:207px;width:81px;height:1px;background:#5A5A5A"></div>
<div style="left:705px;top:208px;width:81px;height:1px;background:#858585"></div>
<svg style="position:absolute;left:764px;top:210px" width="17" height="17"><path d="M2 2L15 15M7 1L15 9" stroke="#5A5A5A" stroke-width="1"/><path d="M3 2L16 15M8 1L16 9" stroke="#8A8A8A" stroke-width="1"/></svg>
<svg style="position:absolute;left:713px;top:217px" width="9" height="8"><path d="M0 0H8.5L4.25 7.5Z" fill="#1A1A1A"/></svg>
<div class="t" style="left:726px;top:215px;font-size:12px;color:#000;">Render</div>
<div style="left:708px;top:240px;width:75px;height:20px;border-radius:4px;background:#2A2A2A"></div>
<div style="left:709px;top:241px;width:24px;height:18px;background:linear-gradient(#ACACAC,#8E8E8E);border-radius:3px 0 0 3px"></div>
<div class="t" style="left:715px;top:246px;font-size:11px;color:#000;"></div>
<div style="left:734px;top:241px;width:24px;height:18px;background:linear-gradient(#ACACAC,#8E8E8E)"></div>
<div class="t" style="left:740px;top:246px;font-size:11px;color:#000;"></div>
<div style="left:759px;top:241px;width:23px;height:18px;background:linear-gradient(#ACACAC,#8E8E8E);border-radius:0 3px 3px 0"></div>
<div class="t" style="left:765px;top:246px;font-size:11px;color:#000;"></div>
<svg style="position:absolute;left:711px;top:242px" width="22" height="16"><rect x="1" y="4.5" width="13" height="9" rx="1" fill="#E8E8E8" stroke="#222" stroke-width="0.8"/><circle cx="8" cy="9" r="3" fill="#333" stroke="#CCC" stroke-width="0.7"/><path d="M13 1V6M10.5 3.5H15.5" stroke="#F0A040" stroke-width="1.6"/></svg>
<div class="t" style="left:726px;top:246px;font-size:11px;color:#000;">R</div>
<svg style="position:absolute;left:735px;top:242px" width="16" height="16"><rect x="1" y="7" width="13" height="8" fill="#3A3A3A" stroke="#222" stroke-width="0.8"/><path d="M1 6L12 2L13 5L2 9Z" fill="#EEE" stroke="#222" stroke-width="0.8"/><path d="M2 10H13" stroke="#AAA"/></svg>
<div class="t" style="left:750px;top:246px;font-size:11px;color:#000;">A</div>
<svg style="position:absolute;left:761px;top:242px" width="14" height="16"><path d="M1.5 1.5V14.5L12.5 8Z" fill="#F4F4F4" stroke="#222" stroke-width="0.9"/></svg>
<div class="t" style="left:775px;top:246px;font-size:11px;color:#000;">P</div>
<div class="t" style="left:716px;top:271px;font-size:11px;color:#000;">Displ</div>
<div class="dk" style="left:749px;top:266px;width:34px;height:19px;"></div>
<div class="t" style="left:757px;top:271px;font-size:11px;color:#FFF;">Im</div>
<svg style="position:absolute;left:773px;top:269px" width="7" height="12"><path d="M0.5 5L3.5 0.5L6.5 5Z M0.5 7L3.5 11.5L6.5 7Z" fill="#BBB"/></svg>
<div style="left:705px;top:292px;width:81px;height:1px;background:#5A5A5A"></div>
<div style="left:705px;top:293px;width:81px;height:1px;background:#858585"></div>
<svg style="position:absolute;left:764px;top:295px" width="17" height="17"><path d="M2 2L15 15M7 1L15 9" stroke="#5A5A5A" stroke-width="1"/><path d="M3 2L16 15M8 1L16 9" stroke="#8A8A8A" stroke-width="1"/></svg>
<svg style="position:absolute;left:713px;top:302px" width="9" height="8"><path d="M0 0H8.5L4.25 7.5Z" fill="#1A1A1A"/></svg>
<div class="t" style="left:726px;top:300px;font-size:12px;color:#000;">Dimensions</div>
<div style="left:708px;top:326px;width:75px;height:19px;border-radius:4px;border:1px solid #222;background:#999"></div>
<div class="dk" style="left:708px;top:326px;width:37px;height:19px;"></div>
<div class="t" style="left:715px;top:331px;font-size:11px;color:#FFF;">Re</div>
<svg style="position:absolute;left:734px;top:329px" width="7" height="12"><path d="M0.5 5L3.5 0.5L6.5 5Z M0.5 7L3.5 11.5L6.5 7Z" fill="#BBB"/></svg>
<div style="left:745px;top:327px;width:18px;height:17px;background:linear-gradient(#ABABAB,#959595)"></div>
<div style="left:763px;top:327px;width:1px;height:17px;background:#222"></div>
<div style="left:764px;top:327px;width:18px;height:17px;background:linear-gradient(#ABABAB,#959595);border-radius:0 3px 3px 0"></div>
<svg style="position:absolute;left:747px;top:329px" width="14" height="14"><path d="M7 1.5V12.5M1.5 7H12.5" stroke="#222" stroke-width="3.2"/><path d="M7 2.2V11.8M2.2 7H11.8" stroke="#fff" stroke-width="1.6"/></svg>
<svg style="position:absolute;left:766px;top:329px" width="14" height="14"><path d="M1.5 7H12.5" stroke="#222" stroke-width="3.2"/><path d="M2.2 7H11.8" stroke="#fff" stroke-width="1.6"/></svg>
<div class="t" style="left:716px;top:356px;font-size:11px;color:#000;">Resol</div>
<div class="t" style="left:757px;top:356px;font-size:11px;color:#000;">Fram</div>
<div style="left:708px;top:370px;width:33px;height:60px;border-radius:9px;border:1px solid #2A2A2A;background:linear-gradient(#A2A2A2,#B4B4B4);overflow:hidden"></div>
<div class="tc" style="left:624px;top:376px;width:200px;font-size:11px;color:#000;">1</div>
<svg style="position:absolute;left:714px;top:376px" width="6" height="8"><path d="M5 0.5V7.5L0.5 4Z" fill="#8A8A8A"/></svg>
<svg style="position:absolute;left:730px;top:376px" width="6" height="8"><path d="M1 0.5V7.5L5.5 4Z" fill="#8A8A8A"/></svg>
<div style="left:709px;top:389.5px;width:31px;height:1px;background:#2A2A2A"></div>
<div class="tc" style="left:624px;top:396px;width:200px;font-size:11px;color:#000;">1</div>
<svg style="position:absolute;left:714px;top:396px" width="6" height="8"><path d="M5 0.5V7.5L0.5 4Z" fill="#8A8A8A"/></svg>
<svg style="position:absolute;left:730px;top:396px" width="6" height="8"><path d="M1 0.5V7.5L5.5 4Z" fill="#8A8A8A"/></svg>
<div style="left:709px;top:409.5px;width:31px;height:1px;background:#2A2A2A"></div>
<div style="left:709px;top:410px;width:20px;height:18px;background:#828282;border-radius:0 0 0 8px"></div>
<div class="t" style="left:720px;top:416px;font-size:11px;color:#000;">5</div>
<div style="left:749px;top:370px;width:34px;height:60px;border-radius:9px;border:1px solid #2A2A2A;background:linear-gradient(#A2A2A2,#B4B4B4);overflow:hidden"></div>
<div class="tc" style="left:666px;top:376px;width:200px;font-size:11px;color:#000;">1</div>
<svg style="position:absolute;left:755px;top:376px" width="6" height="8"><path d="M5 0.5V7.5L0.5 4Z" fill="#8A8A8A"/></svg>
<svg style="position:absolute;left:772px;top:376px" width="6" height="8"><path d="M1 0.5V7.5L5.5 4Z" fill="#8A8A8A"/></svg>
<div style="left:750px;top:389.5px;width:32px;height:1px;background:#2A2A2A"></div>
<div class="tc" style="left:666px;top:396px;width:200px;font-size:11px;color:#000;">2</div>
<svg style="position:absolute;left:755px;top:396px" width="6" height="8"><path d="M5 0.5V7.5L0.5 4Z" fill="#8A8A8A"/></svg>
<svg style="position:absolute;left:772px;top:396px" width="6" height="8"><path d="M1 0.5V7.5L5.5 4Z" fill="#8A8A8A"/></svg>
<div style="left:750px;top:409.5px;width:32px;height:1px;background:#2A2A2A"></div>
<div class="tc" style="left:666px;top:416px;width:200px;font-size:11px;color:#000;">1</div>
<svg style="position:absolute;left:755px;top:416px" width="6" height="8"><path d="M5 0.5V7.5L0.5 4Z" fill="#8A8A8A"/></svg>
<svg style="position:absolute;left:772px;top:416px" width="6" height="8"><path d="M1 0.5V7.5L5.5 4Z" fill="#8A8A8A"/></svg>
<div class="t" style="left:715px;top:436px;font-size:11px;color:#000;">Aspe</div>
<div class="t" style="left:757px;top:436px;font-size:11px;color:#000;">Fram</div>
<div style="left:708px;top:450px;width:33px;height:40px;border-radius:9px;border:1px solid #2A2A2A;background:linear-gradient(#A2A2A2,#B4B4B4);overflow:hidden"></div>
<div class="tc" style="left:624px;top:456px;width:200px;font-size:11px;color:#000;">1</div>
<svg style="position:absolute;left:714px;top:456px" width="6" height="8"><path d="M5 0.5V7.5L0.5 4Z" fill="#8A8A8A"/></svg>
<svg style="position:absolute;left:730px;top:456px" width="6" height="8"><path d="M1 0.5V7.5L5.5 4Z" fill="#8A8A8A"/></svg>
<div style="left:709px;top:469.5px;width:31px;height:1px;background:#2A2A2A"></div>
<div class="tc" style="left:624px;top:476px;width:200px;font-size:11px;color:#000;">1</div>
<svg style="position:absolute;left:714px;top:476px" width="6" height="8"><path d="M5 0.5V7.5L0.5 4Z" fill="#8A8A8A"/></svg>
<svg style="position:absolute;left:730px;top:476px" width="6" height="8"><path d="M1 0.5V7.5L5.5 4Z" fill="#8A8A8A"/></svg>
<div class="dk" style="left:749px;top:450px;width:34px;height:20px;"></div>
<div class="t" style="left:755px;top:456px;font-size:11px;color:#FFF;">24</div>
<svg style="position:absolute;left:773px;top:453px" width="7" height="12"><path d="M0.5 5L3.5 0.5L6.5 5Z M0.5 7L3.5 11.5L6.5 7Z" fill="#BBB"/></svg>
<div class="t" style="left:756px;top:476px;font-size:11px;color:#000;">Time</div>
<div class="dk" style="left:711px;top:495px;width:14px;height:14px;"></div>
<div style="left:731px;top:495px;width:14px;height:14px;background:linear-gradient(#6A6A6A,#5A5A5A);border:1px solid #444;border-radius:4px"></div>
<div style="left:750px;top:491px;width:33px;height:19px;background:linear-gradient(#B8B8B8,#A2A2A2);border:1px solid #2A2A2A;border-radius:9px"></div>
<div style="left:766px;top:492px;width:1px;height:17px;background:#2A2A2A"></div>
<svg style="position:absolute;left:753px;top:496px" width="10" height="9"><path d="M2 1V8M8 1V8L3.5 4.5Z" stroke="#888" stroke-width="1" fill="#888"/></svg>
<svg style="position:absolute;left:770px;top:496px" width="10" height="9"><path d="M8 1V8M2 1V8L6.5 4.5Z" stroke="#888" stroke-width="1" fill="#888"/></svg>
<div style="left:705px;top:519px;width:81px;height:1px;background:#5A5A5A"></div>
<div style="left:705px;top:520px;width:81px;height:1px;background:#858585"></div>
<svg style="position:absolute;left:768px;top:522px" width="17" height="17"><path d="M2 2L15 15M7 1L15 9" stroke="#5A5A5A" stroke-width="1"/><path d="M3 2L16 15M8 1L16 9" stroke="#8A8A8A" stroke-width="1"/></svg>
<svg style="position:absolute;left:713px;top:529px" width="9" height="8"><path d="M0 0H8.5L4.25 7.5Z" fill="#1A1A1A"/></svg>
<div class="dk" style="left:725px;top:526px;width:14px;height:14px;"></div>
<svg style="position:absolute;left:726px;top:524px" width="13" height="13"><path d="M2.5 6.5L5.5 10L11 2" stroke="#222" stroke-width="3" fill="none"/><path d="M2.5 6.5L5.5 10L11 2" stroke="#FFF" stroke-width="1.5" fill="none"/></svg>
<div class="t" style="left:745px;top:527px;font-size:12px;color:#000;;width:46px;overflow:hidden">Anti-Aliasing</div>
<div class="dk" style="left:708px;top:552px;width:33px;height:20px;"></div>
<div style="left:716px;top:553px;width:8px;height:18px;background:#5680C2"></div>
<div style="left:716px;top:553px;width:1px;height:18px;background:#222"></div>
<div style="left:724px;top:553px;width:1px;height:18px;background:#222"></div>
<div style="left:732px;top:553px;width:1px;height:18px;background:#222"></div>
<div class="t" style="left:710px;top:558px;font-size:11px;color:#FFF;">5</div>
<div class="t" style="left:717px;top:558px;font-size:11px;color:#FFF;">8</div>
<div class="t" style="left:725px;top:558px;font-size:11px;color:#FFF;">1</div>
<div class="t" style="left:733px;top:558px;font-size:11px;color:#FFF;">1</div>
<div class="dk" style="left:750px;top:552px;width:33px;height:20px;"></div>
<div class="t" style="left:756px;top:558px;font-size:11px;color:#FFF;">Mi</div>
<svg style="position:absolute;left:773px;top:556px" width="7" height="12"><path d="M0.5 5L3.5 0.5L6.5 5Z M0.5 7L3.5 11.5L6.5 7Z" fill="#BBB"/></svg>
<div class="dk" style="left:711px;top:578px;width:14px;height:14px;"></div>
<div class="t" style="left:732px;top:580px;font-size:11px;color:#000;">F</div>
<div style="left:750px;top:576px;width:33px;height:17px;background:linear-gradient(#B8B8B8,#A2A2A2);border:1px solid #2A2A2A;border-radius:9px"></div>
<div class="tc" style="left:666px;top:580px;width:200px;font-size:11px;color:#000;">1</div>
<svg style="position:absolute;left:755px;top:581px" width="6" height="8"><path d="M5 0.5V7.5L0.5 4Z" fill="#8A8A8A"/></svg>
<svg style="position:absolute;left:773px;top:581px" width="6" height="8"><path d="M1 0.5V7.5L5.5 4Z" fill="#8A8A8A"/></svg>
<div style="left:705px;top:601px;width:81px;height:1px;background:#5A5A5A"></div>
<div style="left:705px;top:602px;width:81px;height:1px;background:#858585"></div>
<svg style="position:absolute;left:714px;top:606px" width="8" height="10"><path d="M0 0V9L7.5 4.5Z" fill="#1A1A1A"/></svg>
<div class="dk" style="left:725px;top:607px;width:14px;height:12px;border-radius:4px 4px 0 0"></div>
<div class="t" style="left:745px;top:608px;font-size:12px;color:#000;;width:41px;overflow:hidden">Sampled Motion Blur</div>
<div style="left:80px;top:57px;width:300px;height:320px;overflow:hidden"><div style="left:23px;top:-1px;width:124px;height:290px;background:rgba(27,27,27,0.96);border-radius:0 0 5px 5px;box-shadow:1px 2px 7px 2px rgba(0,0,0,0.4)"></div></div>
<div style="left:104px;top:116px;width:122px;height:18px;background:linear-gradient(#6A94D6,#5680C2)"></div>
<svg style="position:absolute;left:105px;top:58px" width="15" height="16"><path d="M2 1.8H12.2L7 12.3Z" fill="none" stroke="#E87A2A" stroke-width="1.6"/><path d="M2 1.8H12.2L7 12.3Z" fill="none" stroke="#F8C080" stroke-width="0.5"/><circle cx="2" cy="1.8" r="1.1" fill="#fff"/><circle cx="12.2" cy="1.8" r="1.1" fill="#fff"/><circle cx="7" cy="12.3" r="1.1" fill="#fff"/></svg>
<div class="t" style="left:127px;top:61px;font-size:11px;color:#E6E6E6;">Mesh</div>
<svg style="position:absolute;left:215px;top:61px" width="6" height="9"><path d="M0.5 0.5V8.5L5.5 4.5Z" fill="#7A7A7A"/></svg>
<svg style="position:absolute;left:105px;top:78px" width="15" height="16"><path d="M4 2Q13 3 11 9Q9 13.5 3 13" fill="none" stroke="#F09030" stroke-width="1.8"/><circle cx="3" cy="13" r="1" fill="#fff"/><circle cx="4" cy="2" r="1" fill="#fff"/></svg>
<div class="t" style="left:127px;top:81px;font-size:11px;color:#E6E6E6;">Curve</div>
<svg style="position:absolute;left:215px;top:81px" width="6" height="9"><path d="M0.5 0.5V8.5L5.5 4.5Z" fill="#7A7A7A"/></svg>
<svg style="position:absolute;left:105px;top:98px" width="15" height="16"><path d="M3 7L9 3Q12 2 13 4L13 7Q11 6 9 8L6 11Q4 13 2.5 11.5Q1.5 9 3 7Z" fill="#F09030" stroke="#FFF" stroke-width="0.5"/><path d="M9 3Q12 2 13 4Q11 5 9 4Z" fill="#D03A2A"/></svg>
<div class="t" style="left:127px;top:101px;font-size:11px;color:#E6E6E6;">Surface</div>
<svg style="position:absolute;left:215px;top:101px" width="6" height="9"><path d="M0.5 0.5V8.5L5.5 4.5Z" fill="#7A7A7A"/></svg>
<svg style="position:absolute;left:105px;top:118px" width="15" height="16"><circle cx="4.6" cy="10.2" r="4.4" fill="#222"/><circle cx="11.2" cy="4" r="3.4" fill="#222"/><path d="M4.6 10.2L11.2 4" stroke="#222" stroke-width="3.6"/><circle cx="4.6" cy="10.2" r="3.4" fill="#F0A040"/><circle cx="11.2" cy="4" r="2.4" fill="#F0A040"/><path d="M4.6 10.2L11.2 4" stroke="#F0A040" stroke-width="2"/><path d="M2.5 12Q4.5 12.5 6.5 10.5M9.5 6Q12 5.5 12.5 3" stroke="#D03A2A" stroke-width="1.1" fill="none"/><path d="M1.8 9.5Q2 12.5 4.5 13" stroke="#FFF" stroke-width="0.7" fill="none"/></svg>
<div class="t" style="left:127px;top:121px;font-size:11px;color:#000;">Metaball</div>
<svg style="position:absolute;left:215px;top:121px" width="6" height="9"><path d="M0.5 0.5V8.5L5.5 4.5Z" fill="#8A9CC0"/></svg>
<svg style="position:absolute;left:105px;top:138px" width="15" height="16"><path d="M4 2H12V4.5H11V3.5H7V7.5H10V9H7V12.5H8.5V14H3.5V12.5H5V3.5H4Z" fill="#F0A040"/></svg>
<div class="t" style="left:127px;top:141px;font-size:11px;color:#E6E6E6;">Text</div>
<svg style="position:absolute;left:105px;top:164px" width="15" height="16"><circle cx="7.5" cy="3" r="1.8" fill="#F0A040"/><path d="M2 6H13M7.5 6V9L4 14M7.5 9L11 14" stroke="#F0A040" stroke-width="1.6" fill="none"/></svg>
<div class="t" style="left:127px;top:167px;font-size:11px;color:#E6E6E6;">Armature</div>
<svg style="position:absolute;left:215px;top:167px" width="6" height="9"><path d="M0.5 0.5V8.5L5.5 4.5Z" fill="#7A7A7A"/></svg>
<svg style="position:absolute;left:105px;top:184px" width="15" height="16"><rect x="2" y="2" width="11" height="12" fill="none" stroke="#F0A040" stroke-width="1.4"/><path d="M7.5 2V14M2 8H13" stroke="#F0A040" stroke-width="1.4"/></svg>
<div class="t" style="left:127px;top:187px;font-size:11px;color:#E6E6E6;">Lattice</div>
<svg style="position:absolute;left:105px;top:204px" width="15" height="16"><path d="M7.5 8V1.5M7.5 8L2 12M7.5 8L13 12" stroke="#F0A040" stroke-width="1.8"/><circle cx="2.5" cy="12" r="1.3" fill="#D03A2A"/><circle cx="12.5" cy="12" r="1.3" fill="#EEE"/></svg>
<div class="t" style="left:127px;top:207px;font-size:11px;color:#E6E6E6;">Empty</div>
<svg style="position:absolute;left:215px;top:207px" width="6" height="9"><path d="M0.5 0.5V8.5L5.5 4.5Z" fill="#7A7A7A"/></svg>
<svg style="position:absolute;left:105px;top:230px" width="15" height="16"><path d="M1 6H4L8 3V13L4 10H1Z" fill="#F0A040"/><path d="M10 5Q12 8 10 11M12 3Q15 8 12 13" stroke="#F0A040" stroke-width="1.2" fill="none"/></svg>
<div class="t" style="left:127px;top:233px;font-size:11px;color:#E6E6E6;">Speaker</div>
<svg style="position:absolute;left:105px;top:256px" width="15" height="16"><circle cx="4" cy="4" r="2.6" fill="#F0A040" stroke="#C05020" stroke-width="0.6"/><circle cx="9" cy="4" r="2.6" fill="#F0A040" stroke="#C05020" stroke-width="0.6"/><rect x="2" y="8" width="9" height="5" fill="#F0A040" stroke="#C05020" stroke-width="0.6"/><path d="M11 9L14 8V13L11 12Z" fill="#F0A040"/></svg>
<div class="t" style="left:127px;top:259px;font-size:11px;color:#E6E6E6;">Camera</div>
<svg style="position:absolute;left:105px;top:276px" width="15" height="16"><circle cx="7.5" cy="6" r="4.5" fill="#F0A040"/><circle cx="7.5" cy="6" r="2.5" fill="#D03A2A"/><rect x="5.5" y="10" width="4" height="4.5" fill="#DDD"/></svg>
<div class="t" style="left:127px;top:279px;font-size:11px;color:#E6E6E6;">Lamp</div>
<svg style="position:absolute;left:215px;top:279px" width="6" height="9"><path d="M0.5 0.5V8.5L5.5 4.5Z" fill="#7A7A7A"/></svg>
<svg style="position:absolute;left:105px;top:302px" width="15" height="16"><path d="M7.5 8V1.5M7.5 8L2 12M7.5 8L13 12" stroke="#F0A040" stroke-width="1.8"/><circle cx="2.5" cy="12" r="1.3" fill="#D03A2A"/><circle cx="12.5" cy="12" r="1.3" fill="#EEE"/></svg>
<div class="t" style="left:127px;top:305px;font-size:11px;color:#E6E6E6;">Force Field</div>
<svg style="position:absolute;left:215px;top:305px" width="6" height="9"><path d="M0.5 0.5V8.5L5.5 4.5Z" fill="#7A7A7A"/></svg>
<svg style="position:absolute;left:105px;top:328px" width="15" height="16"><path d="M7.5 8V1.5M7.5 8L2 12M7.5 8L13 12" stroke="#F0A040" stroke-width="1.8"/><circle cx="2.5" cy="12" r="1.3" fill="#D03A2A"/><circle cx="12.5" cy="12" r="1.3" fill="#EEE"/></svg>
<div class="t" style="left:127px;top:331px;font-size:11px;color:#E6E6E6;">Group Instance</div>
<svg style="position:absolute;left:215px;top:331px" width="6" height="9"><path d="M0.5 0.5V8.5L5.5 4.5Z" fill="#7A7A7A"/></svg>
<div style="left:127px;top:72px;width:7px;height:1px;background:#BBB"></div>
<div style="left:127px;top:92px;width:7px;height:1px;background:#BBB"></div>
<div style="left:127px;top:112px;width:6px;height:1px;background:#BBB"></div>
<div style="left:149px;top:132px;width:6px;height:1px;background:#333"></div>
<div style="left:127px;top:152px;width:6px;height:1px;background:#BBB"></div>
<div style="left:127px;top:178px;width:7px;height:1px;background:#BBB"></div>
<div style="left:127px;top:198px;width:6px;height:1px;background:#BBB"></div>
<div style="left:127px;top:218px;width:7px;height:1px;background:#BBB"></div>
<div style="left:134px;top:244px;width:7px;height:1px;background:#BBB"></div>
<div style="left:151px;top:270px;width:6px;height:1px;background:#BBB"></div>
<div style="left:127px;top:290px;width:6px;height:1px;background:#BBB"></div>
<div style="left:127px;top:316px;width:6px;height:1px;background:#BBB"></div>
<div style="left:127px;top:342px;width:7px;height:1px;background:#BBB"></div>
<div style="left:104px;top:158px;width:122px;height:1px;background:#2C2C2C"></div>
<div style="left:104px;top:224px;width:122px;height:1px;background:#2C2C2C"></div>
<div style="left:104px;top:250px;width:122px;height:1px;background:#2C2C2C"></div>
<div style="left:104px;top:296px;width:122px;height:1px;background:#2C2C2C"></div>
<div style="left:104px;top:322px;width:122px;height:1px;background:#2C2C2C"></div>
<div style="left:227px;top:115px;width:124px;height:108px;background:rgba(27,27,27,0.96);border-radius:5px;box-shadow:1px 2px 7px 2px rgba(0,0,0,0.4)"></div>
<svg style="position:absolute;left:229px;top:118px" width="16" height="17"><defs><linearGradient id="wg" x1="0" y1="0" x2="1" y2="1"><stop offset="0" stop-color="#FFF"/><stop offset="1" stop-color="#9A9A9A"/></linearGradient></defs><circle cx="7.2" cy="7.4" r="6.6" fill="#3A3A3A" stroke="#6A6A6A" stroke-width="1.2"/><circle cx="8.8" cy="9.2" r="4.8" fill="url(#wg)" stroke="#111" stroke-width="0.8"/></svg>
<div class="t" style="left:251px;top:121px;font-size:11px;color:#E6E6E6;">Ball</div>
<svg style="position:absolute;left:229px;top:140px" width="16" height="17"><defs><linearGradient id="wg" x1="0" y1="0" x2="1" y2="1"><stop offset="0" stop-color="#FFF"/><stop offset="1" stop-color="#9A9A9A"/></linearGradient></defs><circle cx="7.2" cy="7.4" r="6.6" fill="#3A3A3A" stroke="#6A6A6A" stroke-width="1.2"/><rect x="5.5" y="4.5" width="7" height="10" rx="2" fill="url(#wg)" stroke="#111" stroke-width="0.8"/><ellipse cx="9" cy="6" rx="3.5" ry="1.4" fill="#FFF" stroke="#555" stroke-width="0.5"/></svg>
<div class="t" style="left:251px;top:143px;font-size:11px;color:#E6E6E6;">Capsule</div>
<svg style="position:absolute;left:229px;top:162px" width="16" height="17"><defs><linearGradient id="wg" x1="0" y1="0" x2="1" y2="1"><stop offset="0" stop-color="#FFF"/><stop offset="1" stop-color="#9A9A9A"/></linearGradient></defs><circle cx="7.2" cy="7.4" r="6.6" fill="#3A3A3A" stroke="#6A6A6A" stroke-width="1.2"/><rect x="5" y="5.5" width="9" height="9" fill="url(#wg)" stroke="#111" stroke-width="0.9"/><rect x="7" y="7.5" width="5" height="5" fill="#AAA"/></svg>
<div class="t" style="left:251px;top:165px;font-size:11px;color:#E6E6E6;">Plane</div>
<svg style="position:absolute;left:229px;top:184px" width="16" height="17"><defs><linearGradient id="wg" x1="0" y1="0" x2="1" y2="1"><stop offset="0" stop-color="#FFF"/><stop offset="1" stop-color="#9A9A9A"/></linearGradient></defs><circle cx="7.2" cy="7.4" r="6.6" fill="#3A3A3A" stroke="#6A6A6A" stroke-width="1.2"/><ellipse cx="9" cy="9.5" rx="6" ry="3.6" transform="rotate(40 9 9.5)" fill="url(#wg)" stroke="#111" stroke-width="0.8"/></svg>
<div class="t" style="left:251px;top:187px;font-size:11px;color:#E6E6E6;">Ellipsoid</div>
<svg style="position:absolute;left:229px;top:206px" width="16" height="17"><defs><linearGradient id="wg" x1="0" y1="0" x2="1" y2="1"><stop offset="0" stop-color="#FFF"/><stop offset="1" stop-color="#9A9A9A"/></linearGradient></defs><circle cx="7.2" cy="7.4" r="6.6" fill="#3A3A3A" stroke="#6A6A6A" stroke-width="1.2"/><path d="M9 4L14 6.5V12.5L9 15L4 12.5V6.5Z" fill="#E8E8E8" stroke="#111" stroke-width="0.8"/><path d="M9 9L14 6.5V12.5L9 15Z" fill="#9A9A9A"/></svg>
<div class="t" style="left:251px;top:209px;font-size:11px;color:#E6E6E6;">Cube</div>
<div style="left:251px;top:132px;width:7px;height:1px;background:#BBB"></div>
<div style="left:251px;top:154px;width:7px;height:1px;background:#BBB"></div>
<div style="left:251px;top:176px;width:7px;height:1px;background:#BBB"></div>
<div style="left:251px;top:198px;width:6px;height:1px;background:#BBB"></div>
<div style="left:258px;top:220px;width:6px;height:1px;background:#BBB"></div>
<div style="left:1px;top:31px;width:7px;height:593px;background:#6AABF4"></div>
<div style="left:7px;top:30px;width:1px;height:587px;background:#5A8ED6"></div>
<div style="left:807px;top:31px;width:7px;height:593px;background:#6AABF4"></div>
<div style="left:1px;top:616px;width:813px;height:7px;background:#6AABF4"></div>
<div style="left:0;top:623px;width:815px;height:1px;background:#4F80C4"></div>
<div style="left:814px;top:0;width:1px;height:624px;background:#4F80C4"></div></body></html>
